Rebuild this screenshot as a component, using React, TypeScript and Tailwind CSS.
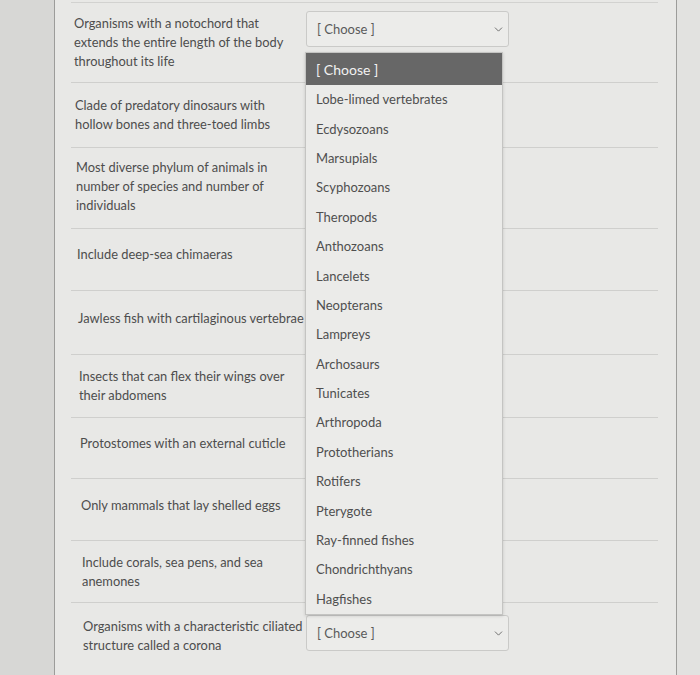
import { ChevronDown } from "lucide-react";

const rows = [
  { text: "Organisms with a notochord that extends the entire length of the body throughout its life", h: "h-[80px]", pad: "pl-[3px]", first: true },
  { text: "Clade of predatory dinosaurs with hollow bones and three-toed limbs", h: "h-[65px]", pad: "pl-[4px] pr-[10px]" },
  { text: "Most diverse phylum of animals in number of species and number of individuals", h: "h-[81px]", pad: "pl-[5px] pb-[4px]" },
  { text: "Include deep-sea chimaeras", h: "h-[62px]", pad: "pl-[6px] pb-[10px]" },
  { text: "Jawless fish with cartilaginous vertebrae", h: "h-[64px]", pad: "pl-[7px] pb-[8px] whitespace-nowrap" },
  { text: "Insects that can flex their wings over their abdomens", h: "h-[63px]", pad: "pl-[8px]" },
  { text: "Protostomes with an external cuticle", h: "h-[61px]", pad: "pl-[9px] pb-[10px]" },
  { text: "Only mammals that lay shelled eggs", h: "h-[62px]", pad: "pl-[10px] pb-[8px]" },
  { text: "Include corals, sea pens, and sea anemones", h: "h-[62px]", pad: "pl-[11px]" },
  { text: "Organisms with a characteristic ciliated structure called a corona", h: "h-[66px]", pad: "pl-[12px]", last: true },
];

const options = [
  "Lobe-limed vertebrates",
  "Ecdysozoans",
  "Marsupials",
  "Scyphozoans",
  "Theropods",
  "Anthozoans",
  "Lancelets",
  "Neopterans",
  "Lampreys",
  "Archosaurs",
  "Tunicates",
  "Arthropoda",
  "Prototherians",
  "Rotifers",
  "Pterygote",
  "Ray-finned fishes",
  "Chondrichthyans",
  "Hagfishes",
];

const Select = ({ className = "" }: { className?: string }) => (
  <div
    className={`flex h-[36px] w-[203px] items-center justify-between rounded-[3px] border border-[#cacac8] bg-[#ececea] pl-[10px] pr-[3px] text-[13px] text-[#5a5a5a] ${className}`}
  >
    <span>[ Choose ]</span>
    <ChevronDown size={13} strokeWidth={1.6} className="text-[#5e5e5e]" />
  </div>
);

export default function App() {
  return (
    <div
      className="relative flex h-[675px] w-[700px] overflow-hidden bg-[#e3e3e1] text-[13px] leading-[19px] text-[#4d4d4d]"
      style={{ fontFamily: "Lato, 'Open Sans', sans-serif" }}
    >
      {/* left margin */}
      <div className="w-[54px] shrink-0 bg-[#d7d7d5]" />

      {/* quiz panel */}
      <div className="w-[623px] shrink-0 border-x border-[#9c9c9a] bg-[#e8e8e6] pl-[16px] pr-[18px] pt-[2px]">
        <div className="border-t border-[#d2d2d0]">
          {rows.map((r, i) => (
            <div
              key={i}
              className={`flex ${r.first ? "items-start" : "items-center"} ${r.h} ${r.last ? "" : "border-b border-[#cfcfcd]"}`}
            >
              <div className={`w-[235px] shrink-0 text-[12.85px] ${r.pad} ${r.first ? "pt-[11px]" : ""}`}>{r.text}</div>
              {r.first && <Select className="mt-[8px]" />}
              {r.last && <Select className="mb-[6px]" />}
            </div>
          ))}
        </div>
      </div>

      {/* right margin */}
      <div className="flex-1 bg-[#e2e2e0]" />

      {/* open dropdown */}
      <div className="absolute left-[305px] top-[52px] w-[198px] border border-[#c4c4c2] bg-[#ebebe9] shadow-[0_1px_3px_rgba(0,0,0,0.15)]">
        <div className="flex h-[32px] items-center bg-[#676767] pl-[10px] text-[14px] text-[#f2f2f2]">[ Choose ]</div>
        {options.map((o) => (
          <div key={o} className="flex h-[29.4px] items-center pl-[10px] text-[#4f4f4f]">
            {o}
          </div>
        ))}
      </div>
    </div>
  );
}
